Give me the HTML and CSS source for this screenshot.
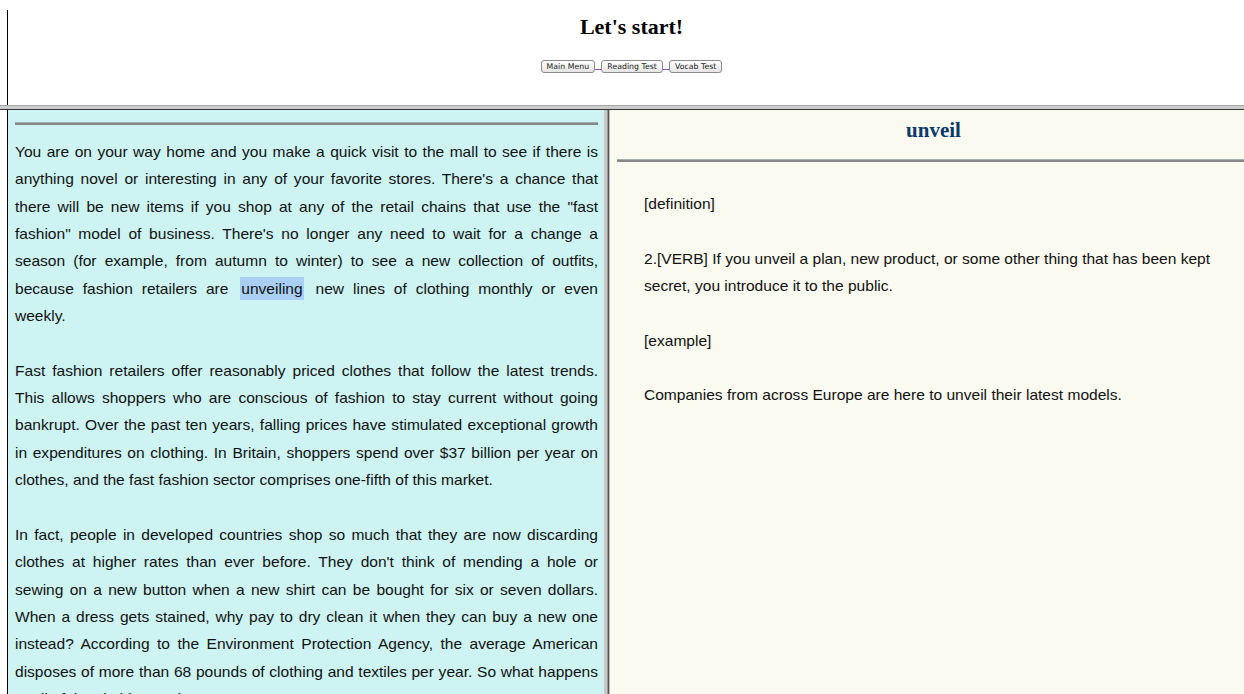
FILE: index.html
```html
<!DOCTYPE html>
<html lang="en">
<head>
<meta charset="utf-8">
<title>Let's start!</title>
<link rel="stylesheet" href="styles.css">
</head>
<body>
<div class="page">
  <header class="top">
    <div class="top-inner">
      <h1 class="title">Let's start!</h1>
      <nav class="nav">
        <a class="nav-link" href="#"><button class="btn" type="button">Main Menu</button> </a><a class="nav-link" href="#"><button class="btn" type="button">Reading Test</button> </a><a class="nav-link" href="#"><button class="btn" type="button">Vocab Test</button></a>
      </nav>
    </div>
  </header>
  <div class="hsplit"></div>
  <main class="frames">
    <section class="reading">
      <hr class="rule">
      <div class="passage">
        <p>You are on your way home and you make a quick visit to the mall to see if there is anything novel or interesting in any of your favorite stores. There's a chance that there will be new items if you shop at any of the retail chains that use the "fast fashion" model of business. There's no longer any need to wait for a change a season (for example, from autumn to winter) to see a new collection of outfits, because fashion retailers are <span class="word-sel">unveiling</span> new lines of clothing monthly or even weekly.</p>
        <p>Fast fashion retailers offer reasonably priced clothes that follow the latest trends. This allows shoppers who are conscious of fashion to stay current without going bankrupt. Over the past ten years, falling prices have stimulated exceptional growth in expenditures on clothing. In Britain, shoppers spend over $37 billion per year on clothes, and the fast fashion sector comprises one-fifth of this market.</p>
        <p>In fact, people in developed countries shop so much that they are now discarding clothes at higher rates than ever before. They don't think of mending a hole or sewing on a new button when a new shirt can be bought for six or seven dollars. When a dress gets stained, why pay to dry clean it when they can buy a new one instead? According to the Environment Protection Agency, the average American disposes of more than 68 pounds of clothing and textiles per year. So what happens to all of the clothing we buy?</p>
      </div>
    </section>
    <div class="vsplit"></div>
    <section class="dictionary">
      <h2 class="headword">unveil</h2>
      <hr class="rule rule-wide">
      <div class="entry">
        <p>[definition]</p>
        <p>2.[VERB] If you unveil a plan, new product, or some other thing that has been kept secret, you introduce it to the public.</p>
        <p>[example]</p>
        <p>Companies from across Europe are here to unveil their latest models.</p>
      </div>
    </section>
  </main>
</div>
</body>
</html>
```
FILE: styles.css
```css
html, body {
  margin: 0;
  padding: 0;
  height: 100%;
  background: #fff;
}

.page {
  height: 694px;
  display: flex;
  flex-direction: column;
  overflow: hidden;
}

/* top frame */
.top {
  height: 105px;
  padding-left: 7px;
  box-sizing: border-box;
  display: flex;
}

.top-inner {
  flex: 1;
  margin-top: 10px;
  border-left: 1px solid #000;
  display: flex;
  flex-direction: column;
  align-items: center;
  padding-left: 11px;
}

.title {
  margin: 4px 0 0;
  font-family: "Liberation Serif", "Times New Roman", serif;
  font-size: 22px;
  font-weight: bold;
  line-height: 25px;
  color: #000;
}

.nav {
  margin-top: 21px;
  display: flex;
  align-items: center;
  line-height: 13px;
}

.nav-link {
  color: #8a4fc8;
  text-decoration: underline;
  font-family: "DejaVu Sans", sans-serif;
  font-size: 7px;
  word-spacing: 4px;
  white-space: pre;
}

.btn {
  height: 13px;
  padding: 0 5px;
  margin: 0;
  border: 1px solid #8c8c8c;
  border-radius: 3px;
  background: linear-gradient(#ffffff, #f1f1f1 55%, #e4e4e4);
  font-family: "DejaVu Sans", "Liberation Sans", sans-serif;
  font-size: 7.8px;
  line-height: 11px;
  word-spacing: 0;
  color: #1a1a1a;
  vertical-align: middle;
  box-sizing: border-box;
}

/* frame borders */
.hsplit {
  height: 5px;
  flex: none;
  box-sizing: border-box;
  border-top: 1px solid #a9a9a9;
  background: #cbcbcb;
  border-bottom: 1px solid #333;
}

.frames {
  flex: 1;
  display: flex;
  min-height: 0;
  padding-left: 7px;
}

.reading {
  width: 597px;
  flex: none;
  border-left: 1px solid #000;
  background: #cdf4f3;
  padding: 12px 6px 0 7px;
  box-sizing: border-box;
  overflow: hidden;
}

.vsplit {
  width: 6px;
  flex: none;
  background: linear-gradient(90deg, #c8c8c8 0, #c8c8c8 3px, #9a9a9a 3px, #9a9a9a 4px, #555 4px, #555 5px, #bdbdbd 5px);
}

.dictionary {
  flex: 1;
  background: #fafaf0;
  padding: 8px 0 0 7px;
  overflow: hidden;
}

.rule {
  margin: 0;
  height: 2px;
  border: none;
  border-top: 1px solid #a3adad;
  background: #878787;
}

.rule-wide {
  margin-top: 17px;
}

.passage,
.entry {
  font-family: "Liberation Sans", Arial, sans-serif;
  font-size: 15.55px;
  line-height: 27.35px;
  color: #111;
}

.passage {
  margin-top: 13px;
  text-align: justify;
}

.passage p {
  margin: 0 0 27.35px;
}

/* selected word: the selection box sits a little apart from its neighbours */
.word-sel {
  background: #a9cff5;
  padding: 3px 1px;
  margin: 0 3px;
}

.headword {
  margin: 0;
  text-align: center;
  font-family: "Liberation Serif", "Times New Roman", serif;
  font-size: 21px;
  font-weight: bold;
  line-height: 24px;
  color: #0b3a68;
  padding-left: 6px;
}

.entry {
  margin-top: 28px;
  padding-left: 27px;
  padding-right: 5px;
}

.entry p {
  margin: 0 0 27.35px;
}
```
